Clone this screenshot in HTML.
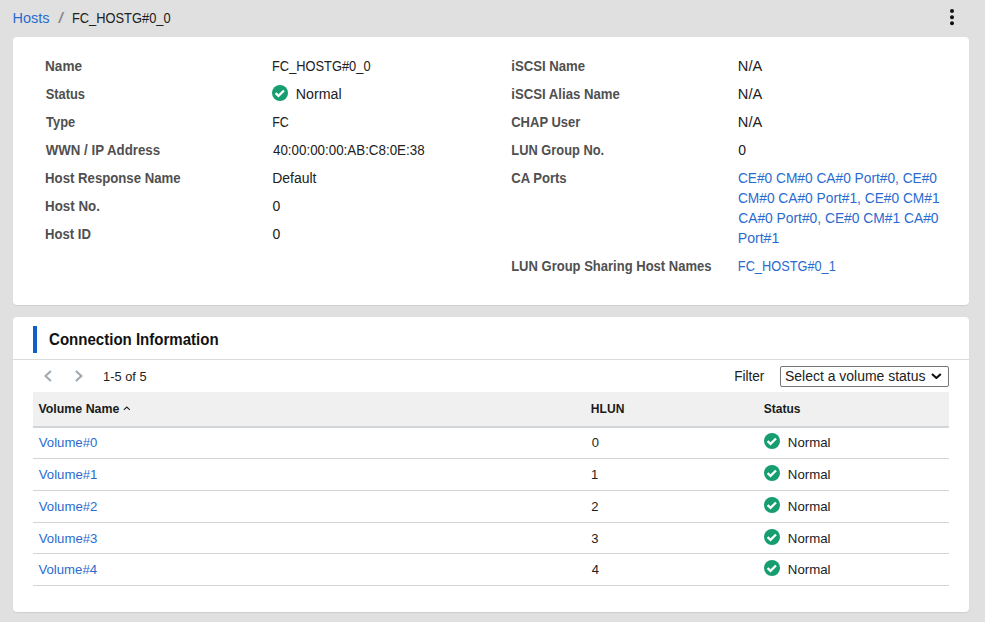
<!DOCTYPE html>
<html lang="en">
<head>
<meta charset="utf-8">
<title>FC_HOSTG#0_0 - Hosts</title>
<style>
*{box-sizing:border-box;margin:0;padding:0}
html,body{width:985px;height:622px;overflow:hidden}
body{background:#e0e0e0;font-family:"Liberation Sans",sans-serif;font-size:14px;color:#212121;position:relative}
a{color:#2a6bd0;text-decoration:none}
.s{display:inline-block;white-space:nowrap;transform-origin:0 50%}
.crumbs{position:absolute;left:13px;top:8px;height:20px;line-height:20px;font-size:14px;white-space:nowrap}
.crumbs>*{position:absolute;top:0;left:0}
.crumbs .sep{color:#8a8a8a;left:45px}
.crumbs .cur{left:59px}
.kebab{position:absolute;left:940px;top:5px;width:24px;height:24px;background:none;border:0}
.kebab svg{display:block}
.card{position:absolute;left:13px;width:956px;background:#fff;border-radius:4px;box-shadow:0 1px 1px rgba(0,0,0,.08)}
.detail{top:37px;height:268px}
.col{position:absolute;top:15px}
.col.left{left:32px;width:440px}
.col.right{left:498px;width:440px}
.row{position:relative;display:block;padding:4px 0;line-height:20px;min-height:28px}
.row dt{position:absolute;left:0;top:4px;font-weight:bold;color:#505050}
.row dd{position:relative;margin-left:227px;min-height:20px}
.row dt .s,.row dd .s{position:absolute;left:0;top:0}
.row dd .s.nm{left:24px}
.row dd .ln{display:block;position:relative;height:20px}
.ok{position:absolute;display:block;width:16px;height:16px}
.conn{top:317px;height:295px}
.conn h2{position:absolute;left:20px;top:9px;height:27px;line-height:27px;border-left:4px solid #0d60c8;padding-left:12px;font-size:16px;font-weight:bold;color:#111;white-space:nowrap}
.conn h2 .s{position:absolute;left:12px;top:0}
.conn .hr{position:absolute;left:0;right:0;top:42px;height:1px;background:#dcdcdc}
.toolbar{position:absolute;left:20px;top:49px;width:916px;height:21px;line-height:21px}
.toolbar .s{position:absolute;top:0;left:0}
.pgbtn{position:absolute;top:2px;width:16px;height:16px}
.pgtxt{font-size:13px;left:70px !important}
.toolbar label{left:701px !important}
.select{position:absolute;left:747px;top:0;width:169px;height:21px;border:1px solid #767676;border-radius:2px;background:#fff;font-size:14px;line-height:19px}
.select .s{left:4px;top:0}
.select svg{position:absolute;left:150px;top:6px}
table{position:absolute;left:20px;top:75px;width:916px;border-collapse:separate;border-spacing:0;font-size:13px;table-layout:fixed}
th{height:36px;background:#f0f0f0;border-bottom:2px solid #d2d5d8;text-align:left;font-weight:bold;color:#1a1a1a;position:relative;padding:0}
td{border-bottom:1px solid #d2d5d8;position:relative;padding:0}
th .s{position:absolute;left:5px;top:9px;line-height:16px}
td .s{position:absolute;left:5px;top:8px;line-height:16px}
td .s.nm{left:30px}
tr.f td .s{top:7px}
tr.a td{height:31px} tr.b td{height:32px}
td .ok{left:730px;top:6px}
tr.f td .ok{top:5px}
th svg{position:absolute;left:90px;top:13px}
</style>
</head>
<body>
<nav class="crumbs"><a href="#" class="s" style="transform:translateX(-0.55px) scaleX(1.0361)">Hosts</a><span class="s sep" style="transform:translateX(-0.07px) scaleX(1.5900)">/</span><span class="s cur" style="transform:translateX(-0.11px) scaleX(0.9194)">FC_HOSTG#0_0</span></nav>
<button class="kebab" aria-label="More"><svg width="24" height="24" viewBox="0 0 24 24"><circle cx="12" cy="6" r="2" fill="#111"/><circle cx="12" cy="12.2" r="2" fill="#111"/><circle cx="12" cy="18.3" r="2" fill="#111"/></svg></button>

<section class="card detail">
 <dl class="col left">
  <div class="row"><dt><span class="s" style="transform:translateX(0.06px) scaleX(0.9707)">Name</span></dt><dd><span class="s" style="transform:translateX(0.03px) scaleX(0.9173)">FC_HOSTG#0_0</span></dd></div>
  <div class="row"><dt><span class="s" style="transform:translateX(0.63px) scaleX(0.9189)">Status</span></dt><dd><svg class="ok" style="left:0;top:1px" viewBox="0 0 16 16"><circle cx="8" cy="8" r="8" fill="#169d70"/><path d="M3.6 8.1 L6.5 10.8 L12 5.5" fill="none" stroke="#fff" stroke-width="2.3"/></svg><span class="s nm" style="transform:translateX(-0.27px) scaleX(1.0161)">Normal</span></dd></div>
  <div class="row"><dt><span class="s" style="transform:translateX(1.07px) scaleX(0.9195)">Type</span></dt><dd><span class="s" style="transform:translateX(0.22px) scaleX(0.8922)">FC</span></dd></div>
  <div class="row"><dt><span class="s" style="transform:translateX(0.77px) scaleX(0.9480)">WWN / IP Address</span></dt><dd><span class="s" style="transform:translateX(1.00px) scaleX(0.9547)">40:00:00:00:AB:C8:0E:38</span></dd></div>
  <div class="row"><dt><span class="s" style="transform:translateX(0.11px) scaleX(0.9410)">Host Response Name</span></dt><dd><span class="s" style="transform:translateX(0.19px) scaleX(0.9960)">Default</span></dd></div>
  <div class="row"><dt><span class="s" style="transform:translateX(0.10px) scaleX(0.9512)">Host No.</span></dt><dd><span class="s" style="transform:translateX(0.49px) scaleX(1.0000)">0</span></dd></div>
  <div class="row"><dt><span class="s" style="transform:translateX(0.11px) scaleX(0.9356)">Host ID</span></dt><dd><span class="s" style="transform:translateX(0.49px) scaleX(1.0000)">0</span></dd></div>
 </dl>
 <dl class="col right">
  <div class="row"><dt><span class="s" style="transform:translateX(0.27px) scaleX(0.9387)">iSCSI Name</span></dt><dd><span class="s" style="transform:translateX(-0.18px) scaleX(1.0450)">N/A</span></dd></div>
  <div class="row"><dt><span class="s" style="transform:translateX(0.27px) scaleX(0.9412)">iSCSI Alias Name</span></dt><dd><span class="s" style="transform:translateX(-0.18px) scaleX(1.0450)">N/A</span></dd></div>
  <div class="row"><dt><span class="s" style="transform:translateX(0.22px) scaleX(0.9287)">CHAP User</span></dt><dd><span class="s" style="transform:translateX(-0.18px) scaleX(1.0450)">N/A</span></dd></div>
  <div class="row"><dt><span class="s" style="transform:translateX(0.35px) scaleX(0.9178)">LUN Group No.</span></dt><dd><span class="s" style="transform:translateX(0.24px) scaleX(1.0000)">0</span></dd></div>
  <div class="row"><dt><span class="s" style="transform:translateX(0.20px) scaleX(0.9336)">CA Ports</span></dt><dd><a href="#"><span class="ln"><span class="s" style="transform:translateX(-0.12px) scaleX(0.9803)">CE#0 CM#0 CA#0 Port#0, CE#0</span></span><span class="ln"><span class="s" style="transform:translateX(-0.12px) scaleX(0.9818)">CM#0 CA#0 Port#1, CE#0 CM#1</span></span><span class="ln"><span class="s" style="transform:translateX(0.20px) scaleX(0.9863)">CA#0 Port#0, CE#0 CM#1 CA#0</span></span><span class="ln"><span class="s" style="transform:translateX(-0.27px) scaleX(1.0081)">Port#1</span></span></a></dd></div>
  <div class="row"><dt><span class="s" style="transform:translateX(0.17px) scaleX(0.9295)">LUN Group Sharing Host Names</span></dt><dd><a href="#" class="s" style="transform:translateX(-0.18px) scaleX(0.9127)">FC_HOSTG#0_1</a></dd></div>
 </dl>
</section>

<section class="card conn">
 <h2><span class="s" style="transform:translateX(0.04px) scaleX(0.9400)">Connection Information</span></h2>
 <div class="hr"></div>
 <div class="toolbar">
  <svg class="pgbtn" style="left:7px" viewBox="0 0 16 16"><path d="M11.6 3.64 L10.15 2.3 L4 8 L10.15 13.7 L11.6 12.36 L6.9 8 Z" fill="#9ea8b3"/></svg>
  <svg class="pgbtn" style="left:38px" viewBox="0 0 16 16"><path d="M4.2 3.64 L5.65 2.3 L11.9 8 L5.65 13.7 L4.2 12.36 L8.9 8 Z" fill="#9ea8b3"/></svg>
  <span class="s pgtxt" style="transform:translateX(0.12px) scaleX(0.9851)">1-5 of 5</span>
  <label class="s" style="transform:translateX(0.24px) scaleX(0.9679)">Filter</label>
  <div class="select"><span class="s" style="transform:translateX(0.05px) scaleX(0.9968)">Select a volume status</span><svg width="12" height="8" viewBox="0 0 12 8"><path d="M1 0.9 L5.4 5 L9.8 0.9" fill="none" stroke="#111" stroke-width="2.1" stroke-linejoin="round"/></svg></div>
 </div>
 <table>
  <colgroup><col style="width:553px"><col style="width:173px"><col></colgroup>
  <thead><tr><th><span class="s" style="transform:translateX(0.45px) scaleX(0.9522)">Volume Name</span><svg width="8" height="6" viewBox="0 0 8 6"><path d="M0.8 4.8 L3.8 2 L6.8 4.8" fill="none" stroke="#222" stroke-width="1.1"/></svg></th><th><span class="s" style="transform:translateX(-0.18px) scaleX(0.9287)">HLUN</span></th><th><span class="s" style="transform:translateX(-0.17px) scaleX(0.9232)">Status</span></th></tr></thead>
  <tbody>
   <tr class="a f"><td><a href="#" class="s" style="transform:translateX(0.79px) scaleX(1.0114)">Volume#0</a></td><td><span class="s" style="transform:translateX(0.65px) scaleX(1.0000)">0</span></td><td><svg class="ok" style="left:5px" viewBox="0 0 16 16"><circle cx="8" cy="8" r="8" fill="#169d70"/><path d="M3.6 8.1 L6.5 10.8 L12 5.5" fill="none" stroke="#fff" stroke-width="2.3"/></svg><span class="s nm" style="transform:translateX(-1.16px) scaleX(1.0191)">Normal</span></td></tr>
   <tr class="b"><td><a href="#" class="s" style="transform:translateX(0.79px) scaleX(1.0142)">Volume#1</a></td><td><span class="s" style="transform:translateX(-0.11px) scaleX(1.0000)">1</span></td><td><svg class="ok" style="left:5px" viewBox="0 0 16 16"><circle cx="8" cy="8" r="8" fill="#169d70"/><path d="M3.6 8.1 L6.5 10.8 L12 5.5" fill="none" stroke="#fff" stroke-width="2.3"/></svg><span class="s nm" style="transform:translateX(-1.16px) scaleX(1.0191)">Normal</span></td></tr>
   <tr class="b"><td><a href="#" class="s" style="transform:translateX(0.78px) scaleX(1.0148)">Volume#2</a></td><td><span class="s" style="transform:translateX(0.17px) scaleX(1.0000)">2</span></td><td><svg class="ok" style="left:5px" viewBox="0 0 16 16"><circle cx="8" cy="8" r="8" fill="#169d70"/><path d="M3.6 8.1 L6.5 10.8 L12 5.5" fill="none" stroke="#fff" stroke-width="2.3"/></svg><span class="s nm" style="transform:translateX(-1.16px) scaleX(1.0191)">Normal</span></td></tr>
   <tr class="a"><td><a href="#" class="s" style="transform:translateX(0.79px) scaleX(1.0138)">Volume#3</a></td><td><span class="s" style="transform:translateX(0.17px) scaleX(1.0000)">3</span></td><td><svg class="ok" style="left:5px" viewBox="0 0 16 16"><circle cx="8" cy="8" r="8" fill="#169d70"/><path d="M3.6 8.1 L6.5 10.8 L12 5.5" fill="none" stroke="#fff" stroke-width="2.3"/></svg><span class="s nm" style="transform:translateX(-1.16px) scaleX(1.0191)">Normal</span></td></tr>
   <tr class="b"><td><a href="#" class="s" style="transform:translateX(0.45px) scaleX(1.0134)">Volume#4</a></td><td><span class="s" style="transform:translateX(0.68px) scaleX(1.0000)">4</span></td><td><svg class="ok" style="left:5px" viewBox="0 0 16 16"><circle cx="8" cy="8" r="8" fill="#169d70"/><path d="M3.6 8.1 L6.5 10.8 L12 5.5" fill="none" stroke="#fff" stroke-width="2.3"/></svg><span class="s nm" style="transform:translateX(-1.16px) scaleX(1.0191)">Normal</span></td></tr>
  </tbody>
 </table>
</section>
</body>
</html>
